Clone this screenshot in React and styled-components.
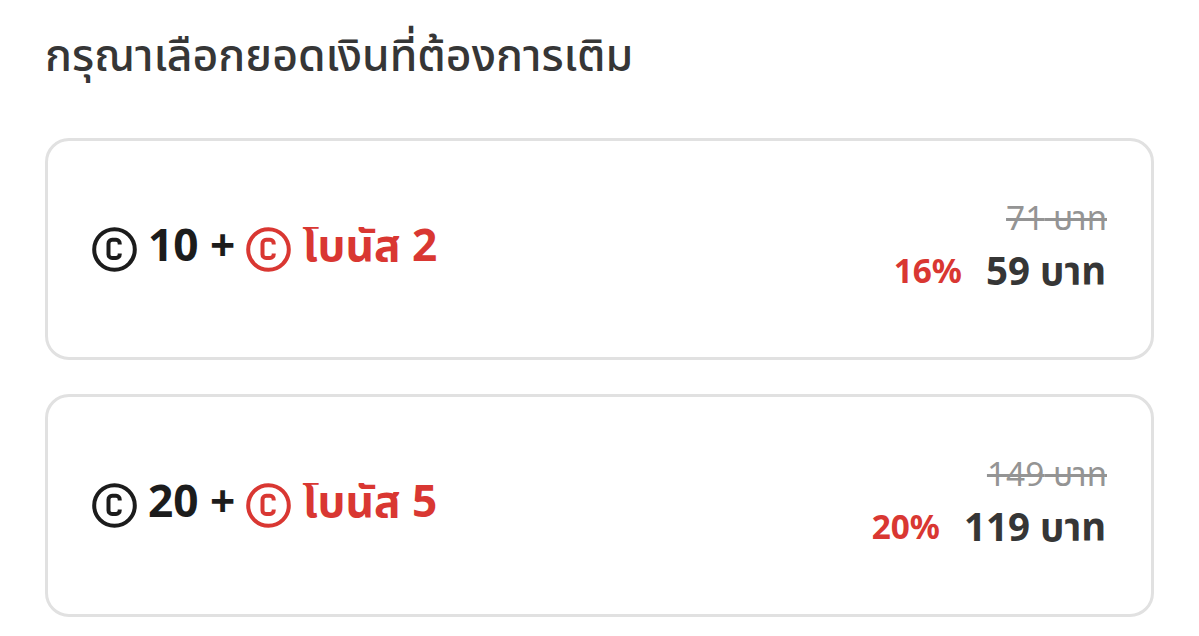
import React from "react";
import styled, { createGlobalStyle } from "styled-components";

const Global = createGlobalStyle`
  * { box-sizing: border-box; }
  body { margin: 0; background: #fff; font-family: "Noto Sans", "Noto Sans Thai", sans-serif; color: #363636; }
`;
const Page = styled.main`padding: 22px 45px 0 45px; width: 1199px; height: 636px; overflow: hidden;`;
const Title = styled.h1`margin: 0; height: 115.8px; font-size: 44.5px; line-height: 64px; font-weight: 500; white-space: nowrap;`;
const List = styled.div`display: flex; flex-direction: column; gap: 34px;`;
const Card = styled.section`
  display: flex; justify-content: space-between; align-items: flex-start;
  height: 222.6px; padding: 0 45px 0 44px; border: 3px solid #e1e1e1; border-radius: 24px;
`;
const Coins = styled.div`
  display: flex; align-items: flex-start; gap: 11px; height: 54px; margin-top: 86px; overflow: hidden;
  font-size: 44.2px; line-height: 44px; font-weight: 700; color: #1c1c1c; white-space: nowrap;
`;
const Amount = styled.span`height: 44px; margin-top: -5px;`;
const Bonus = styled(Amount)`color: #d93732;`;
const Prices = styled.div`display: flex; flex-direction: column; align-items: flex-end; padding-top: 51px; white-space: nowrap;`;
const OldPrice = styled.del`
  height: 50px; margin-right: -1px; font-size: 33.4px; line-height: 50px; font-weight: 390; color: #949494;
  text-decoration: underline 2.5px; text-underline-offset: -12px; text-decoration-skip-ink: none;
`;
const Sale = styled.div`display: flex; align-items: center; gap: 24px; height: 56px; line-height: 56px; font-weight: 700;`;
const Discount = styled.span`height: 56px; font-size: 33.4px; color: #d93732;`;
const Price = styled.span`height: 56px; font-size: 38.5px;`;

function Coin({ color }) {
  return (
    <svg width="45" height="45" viewBox="0 0 45 45" fill="none" stroke={color} strokeWidth="4">
      <circle cx="22.5" cy="22.5" r="20.3" />
      <path d="M27.7 17.4V16.4a3.6 3.6 0 0 0-3.6-3.6h-4a3.6 3.6 0 0 0-3.6 3.6v11a3.6 3.6 0 0 0 3.6 3.6h4a3.6 3.6 0 0 0 3.6-3.6V26.4" />
    </svg>
  );
}
const items = [
  { coins: 10, bonus: 2, old: 71, off: 16, price: 59 },
  { coins: 20, bonus: 5, old: 149, off: 20, price: 119 },
];
export default function App() {
  return (
    <Page>
      <Global />
      <Title>กรุณาเลือกยอดเงินที่ต้องการเติม</Title>
      <List>
        {items.map((i) => (
          <Card key={i.coins}>
            <Coins><Coin color="#1c1c1c" /><Amount>{i.coins} +</Amount><Coin color="#d93732" /><Bonus>โบนัส {i.bonus}</Bonus></Coins>
            <Prices><OldPrice>{i.old} บาท</OldPrice><Sale><Discount>{i.off}%</Discount><Price>{i.price} บาท</Price></Sale></Prices>
          </Card>
        ))}
      </List>
    </Page>
  );
}
